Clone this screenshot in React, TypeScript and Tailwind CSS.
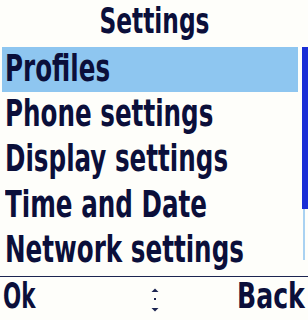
import React from "react";

const items = ["Profiles", "Phone settings", "Display settings", "Time and Date", "Network settings"];

export default function App() {
  return (
    <div
      className="w-[308px] h-[320px] bg-[#fefefa] text-[#0b0f3a] flex flex-col overflow-hidden"
      style={{ fontFamily: '"DejaVu Sans Condensed", "DejaVu Sans", sans-serif' }}
    >
      <div className="h-[47px] flex items-start justify-center pt-[3px] text-[36px] font-bold leading-none">
        <span className="inline-block whitespace-nowrap origin-center scale-x-[0.72]">Settings</span>
      </div>
      <div className="flex h-[229px] pl-[2px]">
        <div className="w-[296px] flex flex-col">
          {items.map((t, i) => (
            <div
              key={t}
              className={
                "h-[45.2px] flex items-start pt-[2px] pl-[3px] text-[38px] font-bold leading-none whitespace-nowrap " +
                (i === 0 ? "bg-[#8ec6f0]" : "")
              }
            >
              <span className="inline-block origin-left scale-x-[0.72]">{t}</span>
            </div>
          ))}
        </div>
        <div className="ml-[4px] w-[6px] flex flex-col items-center">
          <div className="w-[6px] h-[162px] bg-[#1a2ed6]" />
          <div className="w-[2px] h-[51px] bg-[#a9d2f2] -ml-[2px]" />
        </div>
      </div>
      <div className="h-[1px] bg-[#1c2450]" />
      <div className="flex-1 grid grid-cols-[1fr_auto_1fr] items-start pt-[2px] px-[3px] text-[35px] font-bold leading-none">
        <span className="inline-block origin-left scale-x-[0.68] justify-self-start">Ok</span>
        <svg width="8" height="26" viewBox="0 0 8 26" className="mt-[9px] ml-[1px]">
          <polygon points="0.5,4 4,0.5 7.5,4" fill="#1c2450" />
          <rect x="3" y="10" width="2" height="2" fill="#1c2450" />
          <polygon points="0.5,20 7.5,20 4,23.5" fill="#1c2450" />
        </svg>
        <span className="inline-block origin-right scale-x-[0.8] justify-self-end">Back</span>
      </div>
    </div>
  );
}
